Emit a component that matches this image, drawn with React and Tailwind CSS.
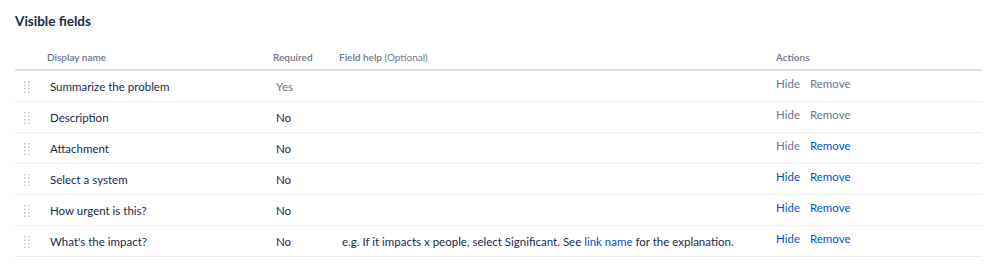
import React from "react";

const rows = [
  { name: "Summarize the problem", req: "Yes", reqMuted: true, help: null, hide: false, remove: false },
  { name: "Description", req: "No", help: null, hide: false, remove: false },
  { name: "Attachment", req: "No", help: null, hide: false, remove: true },
  { name: "Select a system", req: "No", help: null, hide: true, remove: true },
  { name: "How urgent is this?", req: "No", help: null, hide: true, remove: true },
  { name: "What's the impact?", req: "No", help: true, hide: true, remove: true },
];

function Handle() {
  const dots = [];
  for (let r = 0; r < 4; r++) {
    for (let c = 0; c < 2; c++) {
      dots.push(<rect key={r + "-" + c} x={c * 4} y={r * 3.5} width="1.5" height="1.5" fill="#c1c7d0" />);
    }
  }
  return (
    <svg width="6" height="12" viewBox="0 0 6 12" className="block">
      {dots}
    </svg>
  );
}

export default function App() {
  const cols = "grid grid-cols-[32px_226px_66px_437px_206px]";
  return (
    <div className="bg-white w-[999px] h-[278px] pt-[12px] pl-[15px] text-[#172b4d]" style={{ fontFamily: 'Lato, "Noto Sans", sans-serif' }}>
      <h2 className="text-[13.5px] font-bold leading-[18px] text-[#172b4d]">Visible fields</h2>
      <div className="mt-[17px] w-[967px]">
        <div className={`${cols} h-[24px] items-center pb-[2px] border-b-2 border-[#dfe1e6] text-[10px] font-semibold text-[#6b778c]`}>
          <div></div>
          <div>Display name</div>
          <div>Required</div>
          <div>
            Field help <span className="font-normal">(Optional)</span>
          </div>
          <div>Actions</div>
        </div>
        {rows.map((r, i) => (
          <div key={i} className={`${cols} h-[31px] items-center pt-[1px] border-b border-[#ebecf0] text-[11.5px]`}>
            <div className="pl-[9px]">
              <Handle />
            </div>
            <div className="pl-[3px] text-[#172b4d]">{r.name}</div>
            <div className={`pl-[3px] ${r.reqMuted ? "text-[#6b778c]" : "text-[#172b4d]"}`}>{r.req}</div>
            <div className="pl-[3px] text-[#172b4d] whitespace-nowrap">
              {r.help ? (
                <>
                  e.g. If it impacts x people, select Significant. See <span className="text-[#0052cc]">link name</span> for the explanation.
                </>
              ) : null}
            </div>
            <div className="flex gap-[10px] -mt-[5px]">
              <span className={r.hide ? "text-[#0052cc]" : "text-[#6b778c]"}>Hide</span>
              <span className={r.remove ? "text-[#0052cc]" : "text-[#6b778c]"}>Remove</span>
            </div>
          </div>
        ))}
      </div>
    </div>
  );
}
